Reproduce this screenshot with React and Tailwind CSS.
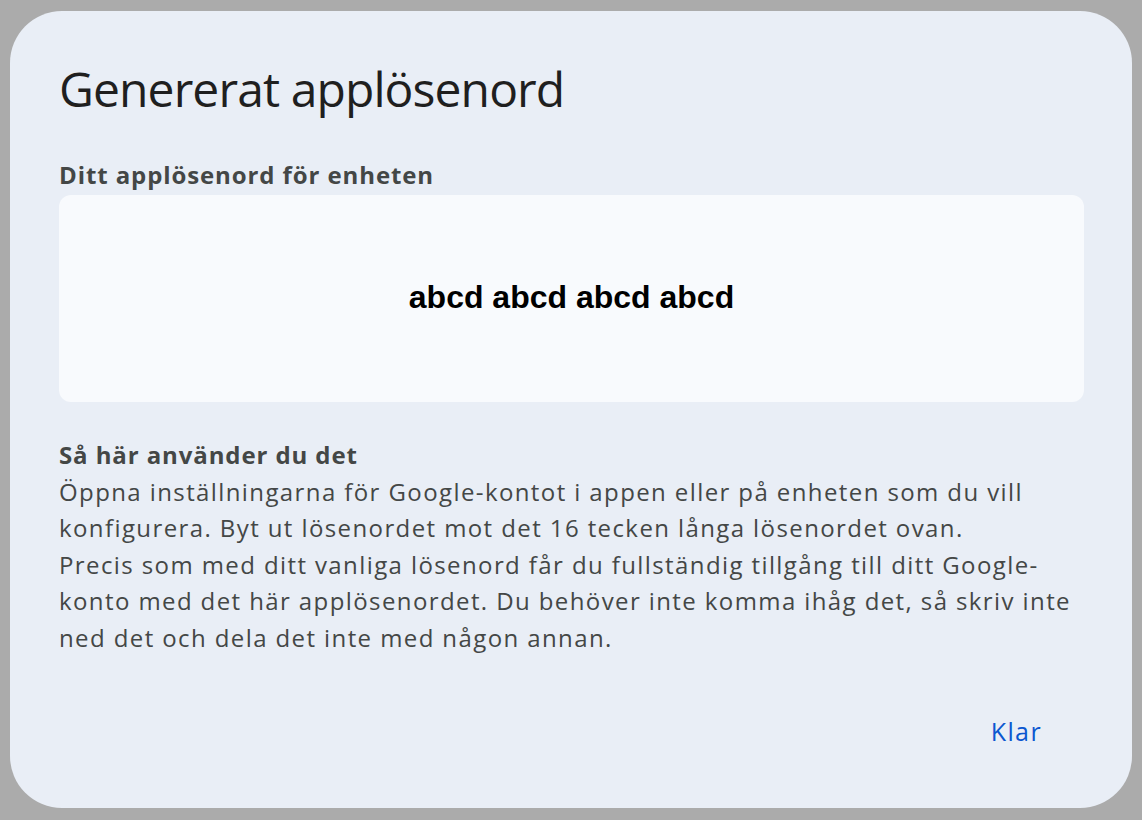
import React from "react";

const sans = { fontFamily: '"Open Sans", "Noto Sans", sans-serif' };

export default function App() {
  return (
    <div className="w-full h-[820px] bg-[#ababab] px-[10px] pt-[11px] pb-[12px]">
      <div
        className="h-full rounded-[52px] bg-[#e9eef6] pl-[49px] pr-[48px] pt-[50px] flex flex-col"
        style={sans}
      >
        <h1 className="text-[48px] leading-[56px] text-[#1f1f1f] font-normal tracking-[-0.9px]">
          Genererat applösenord
        </h1>
        <h2 className="mt-[42px] text-[24px] leading-[32px] font-bold tracking-[0.9px] text-[#444746]">
          Ditt applösenord för enheten
        </h2>
        <div className="mt-[4px] h-[207px] rounded-[12px] bg-[#f8fafd] flex items-center justify-center">
          <span
            className="text-[32px] font-bold text-black -mt-[4px]"
            style={{ fontFamily: '"Liberation Sans", Arial, sans-serif' }}
          >
            abcd abcd abcd abcd
          </span>
        </div>
        <div className="mt-[35px] text-[24px] leading-[36.5px] tracking-[1.4px] text-[#444746]">
          <p className="font-bold tracking-[0.9px]">Så här använder du det</p>
          <p>
            Öppna inställningarna för Google-kontot i appen eller på enheten som du vill konfigurera. Byt ut
            lösenordet mot det 16 tecken långa lösenordet ovan.
          </p>
          <p>
            Precis som med ditt vanliga lösenord får du fullständig tillgång till ditt Google-konto med det
            här applösenordet. Du behöver inte komma ihåg det, så skriv inte ned det och dela det inte med
            någon annan.
          </p>
        </div>
        <div className="mt-auto mb-[58px] flex justify-end pr-[42px]">
          <button className="text-[25px] font-medium tracking-[1.4px] text-[#0b57d0]">Klar</button>
        </div>
      </div>
    </div>
  );
}
